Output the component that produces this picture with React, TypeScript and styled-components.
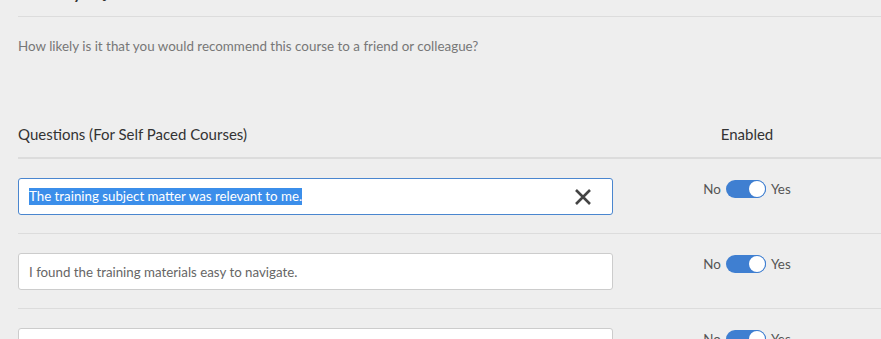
import React from "react";
import styled, { createGlobalStyle } from "styled-components";

const Global = createGlobalStyle`
  html, body { margin: 0; padding: 0; background: #eeeeee; overflow: hidden; }
  body { font-family: "Source Sans Pro", Lato, "Open Sans", sans-serif; }
`;

const Page = styled.div`
  margin-left: 18px;
  height: 339px;
  overflow: hidden;
`;

const TitleBlock = styled.div`
  height: 16px;
  border-bottom: 1px solid #dcdcdc;
  overflow: hidden;
`;

const Title = styled.h2`
  margin: -24px 0 0 0;
  font-size: 22px;
  font-weight: 400;
  line-height: 28px;
  color: #333;
`;

const Prompt = styled.p`
  margin: 20px 0 0 0;
  font-size: 13.4px;
  line-height: 18px;
  color: #777;
`;

const HeaderRow = styled.div`
  display: grid;
  grid-template-columns: 595px 1fr;
  align-items: center;
  margin-top: 67px;
  height: 24px;
  border-bottom: 2px solid #dcdcdc;
  padding-bottom: 11px;
`;

const HeaderCell = styled.div<{ $center?: boolean }>`
  font-size: 15px;
  color: #333;
  text-align: ${(p) => (p.$center ? "center" : "left")};
`;

const Row = styled.div`
  display: grid;
  grid-template-columns: 595px 1fr;
  height: 74px;
  border-bottom: 1px solid #dcdcdc;
`;

const Field = styled.div<{ $focused?: boolean }>`
  margin-top: 19px;
  height: 37px;
  box-sizing: border-box;
  background: #fff;
  border: 1px solid ${(p) => (p.$focused ? "#4a86cf" : "#cccccc")};
  border-radius: 3px;
  display: flex;
  align-items: center;
  padding: 0 10px;
  font-size: 13.3px;
  color: #666;
  position: relative;
`;

const Selected = styled.span`
  background: #3b8eea;
  color: #fff;
  line-height: 17px;
`;

const ClearButton = styled.span`
  position: absolute;
  right: 20px;
  top: 50%;
  transform: translateY(-50%);
  display: flex;
`;

const ToggleCell = styled.div`
  display: flex;
  justify-content: center;
  align-items: flex-start;
  padding-top: 21px;
`;

const ToggleGroup = styled.div`
  display: flex;
  align-items: center;
  gap: 5px;
  font-size: 13.4px;
  color: #555;
`;

const Track = styled.span<{ $on: boolean }>`
  width: 40px;
  height: 18px;
  border-radius: 9px;
  background: ${(p) => (p.$on ? "#3f7fd1" : "#bbb")};
  position: relative;
  display: inline-block;
`;

const Knob = styled.span<{ $on: boolean }>`
  position: absolute;
  top: 1px;
  ${(p) => (p.$on ? "right: 1px;" : "left: 1px;")}
  width: 16px;
  height: 16px;
  border-radius: 50%;
  background: #fff;
  box-shadow: 0 0 0 1px #3f7fd1;
`;

const Toggle = ({ on }: { on: boolean }) => (
  <ToggleGroup>
    <span>No</span>
    <Track $on={on}>
      <Knob $on={on} />
    </Track>
    <span>Yes</span>
  </ToggleGroup>
);

const XIcon = () => (
  <svg width="18" height="16" viewBox="0 0 18 16">
    <path d="M2 1 L16 15 M16 1 L2 15" stroke="#444" strokeWidth="2.6" strokeLinecap="butt" fill="none" />
  </svg>
);

const questions = [
  { text: "The training subject matter was relevant to me.", focused: true },
  { text: "I found the training materials easy to navigate.", focused: false },
  { text: "", focused: false },
];

export default function App() {
  return (
    <>
      <Global />
      <Page>
        <TitleBlock>
          <Title>Survey Question</Title>
        </TitleBlock>
        <Prompt>How likely is it that you would recommend this course to a friend or colleague?</Prompt>
        <HeaderRow>
          <HeaderCell>Questions (For Self Paced Courses)</HeaderCell>
          <HeaderCell $center>Enabled</HeaderCell>
        </HeaderRow>
        {questions.map((q, i) => (
          <Row key={i}>
            <Field $focused={q.focused}>
              {q.focused ? <Selected>{q.text}</Selected> : q.text}
              {q.focused && (
                <ClearButton>
                  <XIcon />
                </ClearButton>
              )}
            </Field>
            <ToggleCell>
              <Toggle on />
            </ToggleCell>
          </Row>
        ))}
      </Page>
    </>
  );
}
